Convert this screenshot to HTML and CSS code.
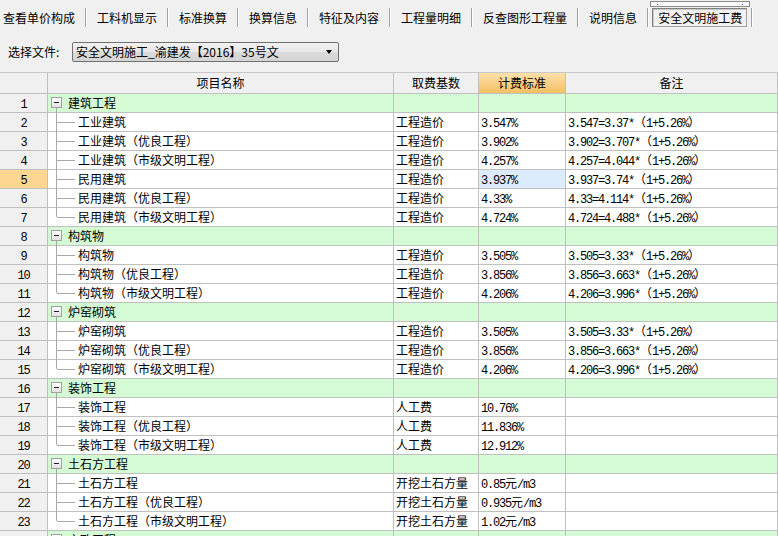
FILE: index.html
```html
<!DOCTYPE html>
<html lang="zh-CN">
<head>
<meta charset="utf-8">
<title>安全文明施工费</title>
<link rel="stylesheet" href="styles.css">
</head>
<body>
<div class="tabs">
  <div class="tab first">查看单价构成</div>
  <div class="tab">工料机显示</div>
  <div class="tab">标准换算</div>
  <div class="tab">换算信息</div>
  <div class="tab">特征及内容</div>
  <div class="tab">工程量明细</div>
  <div class="tab">反查图形工程量</div>
  <div class="tab">说明信息</div>
  <div class="tab active"><span class="pressed">安全文明施工费</span></div>
  <div class="scrollmark"><i></i><i></i></div>
</div>
<div class="filebar">
  <span class="label">选择文件:</span>
  <div class="combo"><span>安全文明施工_渝建发【2016】35号文</span><b class="arrow"></b></div>
</div>
<div class="grid">
  <div class="row head">
    <div class="c num"></div>
    <div class="c name">项目名称</div>
    <div class="c">取费基数</div>
    <div class="c hl">计费标准</div>
    <div class="c">备注</div>
  </div>

  <div class="row group"><div class="c num"><span class="m">1</span></div><div class="c name"><i class="box"></i>建筑工程</div><div class="c"></div><div class="c"></div><div class="c"></div></div>
  <div class="row"><div class="c num"><span class="m">2</span></div><div class="c name child">工业建筑</div><div class="c">工程造价</div><div class="c"><span class="m">3.547%</span></div><div class="c"><span class="m">3.547=3.37*</span>（<span class="m">1+5.26%</span>）</div></div>
  <div class="row"><div class="c num"><span class="m">3</span></div><div class="c name child">工业建筑（优良工程）</div><div class="c">工程造价</div><div class="c"><span class="m">3.902%</span></div><div class="c"><span class="m">3.902=3.707*</span>（<span class="m">1+5.26%</span>）</div></div>
  <div class="row"><div class="c num"><span class="m">4</span></div><div class="c name child">工业建筑（市级文明工程）</div><div class="c">工程造价</div><div class="c"><span class="m">4.257%</span></div><div class="c"><span class="m">4.257=4.044*</span>（<span class="m">1+5.26%</span>）</div></div>
  <div class="row sel"><div class="c num"><span class="m">5</span></div><div class="c name child">民用建筑</div><div class="c">工程造价</div><div class="c cur"><span class="m">3.937%</span></div><div class="c"><span class="m">3.937=3.74*</span>（<span class="m">1+5.26%</span>）</div></div>
  <div class="row"><div class="c num"><span class="m">6</span></div><div class="c name child">民用建筑（优良工程）</div><div class="c">工程造价</div><div class="c"><span class="m">4.33%</span></div><div class="c"><span class="m">4.33=4.114*</span>（<span class="m">1+5.26%</span>）</div></div>
  <div class="row"><div class="c num"><span class="m">7</span></div><div class="c name child last">民用建筑（市级文明工程）</div><div class="c">工程造价</div><div class="c"><span class="m">4.724%</span></div><div class="c"><span class="m">4.724=4.488*</span>（<span class="m">1+5.26%</span>）</div></div>

  <div class="row group"><div class="c num"><span class="m">8</span></div><div class="c name"><i class="box"></i>构筑物</div><div class="c"></div><div class="c"></div><div class="c"></div></div>
  <div class="row"><div class="c num"><span class="m">9</span></div><div class="c name child">构筑物</div><div class="c">工程造价</div><div class="c"><span class="m">3.505%</span></div><div class="c"><span class="m">3.505=3.33*</span>（<span class="m">1+5.26%</span>）</div></div>
  <div class="row"><div class="c num"><span class="m">10</span></div><div class="c name child">构筑物（优良工程）</div><div class="c">工程造价</div><div class="c"><span class="m">3.856%</span></div><div class="c"><span class="m">3.856=3.663*</span>（<span class="m">1+5.26%</span>）</div></div>
  <div class="row"><div class="c num"><span class="m">11</span></div><div class="c name child last">构筑物（市级文明工程）</div><div class="c">工程造价</div><div class="c"><span class="m">4.206%</span></div><div class="c"><span class="m">4.206=3.996*</span>（<span class="m">1+5.26%</span>）</div></div>

  <div class="row group"><div class="c num"><span class="m">12</span></div><div class="c name"><i class="box"></i>炉窑砌筑</div><div class="c"></div><div class="c"></div><div class="c"></div></div>
  <div class="row"><div class="c num"><span class="m">13</span></div><div class="c name child">炉窑砌筑</div><div class="c">工程造价</div><div class="c"><span class="m">3.505%</span></div><div class="c"><span class="m">3.505=3.33*</span>（<span class="m">1+5.26%</span>）</div></div>
  <div class="row"><div class="c num"><span class="m">14</span></div><div class="c name child">炉窑砌筑（优良工程）</div><div class="c">工程造价</div><div class="c"><span class="m">3.856%</span></div><div class="c"><span class="m">3.856=3.663*</span>（<span class="m">1+5.26%</span>）</div></div>
  <div class="row"><div class="c num"><span class="m">15</span></div><div class="c name child last">炉窑砌筑（市级文明工程）</div><div class="c">工程造价</div><div class="c"><span class="m">4.206%</span></div><div class="c"><span class="m">4.206=3.996*</span>（<span class="m">1+5.26%</span>）</div></div>

  <div class="row group"><div class="c num"><span class="m">16</span></div><div class="c name"><i class="box"></i>装饰工程</div><div class="c"></div><div class="c"></div><div class="c"></div></div>
  <div class="row"><div class="c num"><span class="m">17</span></div><div class="c name child">装饰工程</div><div class="c">人工费</div><div class="c"><span class="m">10.76%</span></div><div class="c"></div></div>
  <div class="row"><div class="c num"><span class="m">18</span></div><div class="c name child">装饰工程（优良工程）</div><div class="c">人工费</div><div class="c"><span class="m">11.836%</span></div><div class="c"></div></div>
  <div class="row"><div class="c num"><span class="m">19</span></div><div class="c name child last">装饰工程（市级文明工程）</div><div class="c">人工费</div><div class="c"><span class="m">12.912%</span></div><div class="c"></div></div>

  <div class="row group"><div class="c num"><span class="m">20</span></div><div class="c name"><i class="box"></i>土石方工程</div><div class="c"></div><div class="c"></div><div class="c"></div></div>
  <div class="row"><div class="c num"><span class="m">21</span></div><div class="c name child">土石方工程</div><div class="c">开挖土石方量</div><div class="c"><span class="m">0.85</span>元<span class="m">/m3</span></div><div class="c"></div></div>
  <div class="row"><div class="c num"><span class="m">22</span></div><div class="c name child">土石方工程（优良工程）</div><div class="c">开挖土石方量</div><div class="c"><span class="m">0.935</span>元<span class="m">/m3</span></div><div class="c"></div></div>
  <div class="row"><div class="c num"><span class="m">23</span></div><div class="c name child last">土石方工程（市级文明工程）</div><div class="c">开挖土石方量</div><div class="c"><span class="m">1.02</span>元<span class="m">/m3</span></div><div class="c"></div></div>

  <div class="row group"><div class="c num"><span class="m">24</span></div><div class="c name"><i class="box"></i>市政工程</div><div class="c"></div><div class="c"></div><div class="c"></div></div>
</div>
</body>
</html>
```
FILE: styles.css
```css
* { box-sizing: border-box; }
html, body {
  margin: 0;
  padding: 0;
  width: 778px;
  height: 536px;
  overflow: hidden;
  background: #f0f0f0;
  font-family: "Noto Sans CJK SC", "Liberation Sans", sans-serif;
  font-size: 12px;
  color: #000;
}

/* ---------- tab bar ---------- */
.tabs {
  position: relative;
  display: flex;
  align-items: flex-start;
  height: 36px;
  padding-top: 8px;
}
.tab {
  height: 19px;
  line-height: 19px;
  padding: 0 10px;
  border-right: 1px solid #a0a0a0;
  box-shadow: 1px 0 0 #ffffff;
  margin-right: 1px;
  white-space: nowrap;
}
.tab.first { padding-left: 3px; }
.tab.active { padding: 0 4px 0 3px; }
.pressed {
  display: block;
  height: 19px;
  line-height: 17px;
  padding: 0 4px 0 5px;
  border: 1px solid #a0a0a0;
  border-top-color: #808080;
  border-left-color: #808080;
  box-shadow: inset 1px 1px 0 #c8c8c8;
  background: repeating-conic-gradient(#ffffff 0 25%, #e6e6e6 0 50%) 0 0 / 2px 2px;
}
.scrollmark {
  position: absolute;
  left: 650px;
  top: 1px;
  width: 100px;
  height: 6px;
  border: 1px solid #8a8a8a;
  background: #f8f8f8;
}
.scrollmark i {
  position: absolute;
  top: 2px;
  width: 1px;
  height: 1px;
  background: #1c2fc0;
}
.scrollmark i:first-child { left: 6px; }
.scrollmark i:last-child { right: 6px; }

/* ---------- file selector ---------- */
.filebar {
  display: flex;
  align-items: flex-start;
  height: 36px;
  padding-top: 6px;
}
.label {
  margin-left: 8px;
  width: 64px;
  line-height: 20px;
}
.combo {
  position: relative;
  width: 267px;
  height: 20px;
  line-height: 18px;
  padding-left: 3px;
  border: 1px solid #707070;
  border-radius: 2px;
  background: linear-gradient(#f2f2f2, #e6e6e6 50%, #dadada 51%, #d4d4d4);
  white-space: nowrap;
  overflow: hidden;
}
.arrow {
  position: absolute;
  right: 6px;
  top: 7px;
  width: 0;
  height: 0;
  border-left: 3.5px solid transparent;
  border-right: 3.5px solid transparent;
  border-top: 4px solid #000;
}

/* ---------- grid ---------- */
.grid {
  width: 778px;
  border-top: 1px solid #c8c8c8;
}
.row {
  display: grid;
  grid-template-columns: 48px 346px 85px 87px 212px;
  height: 19px;
}
.c {
  position: relative;
  height: 19px;
  line-height: 18px;
  padding-left: 2px;
  border-right: 1px solid #c0c0c0;
  border-bottom: 1px solid #c0c0c0;
  background: #ffffff;
  white-space: nowrap;
  overflow: hidden;
}
.c.num {
  background: #f0f0f0;
  text-align: center;
  padding-left: 0;
}
.row.head { height: 21px; }
.row.head .c {
  height: 21px;
  line-height: 20px;
  background: #f0f0f0;
  text-align: center;
  padding-left: 0;
}
.row.head .c.hl {
  background: linear-gradient(#fde0a9, #f8d088 50%, #f2c163);
}
.row.group .c:not(.num) { background: #d4fbd4; }
.row.sel .c.num { background: #fdd691; }
.c.cur { background: #ddecfc; }

.m {
  font-family: "Liberation Mono", monospace;
  font-size: 12px;
  letter-spacing: -1.2px;
}

/* tree */
.c.name { padding-left: 20px; overflow: visible; }
.c.name.child { padding-left: 30px; }
.box {
  position: absolute;
  left: 3px;
  top: 3px;
  width: 11px;
  height: 11px;
  border: 1px solid #a0a0a0;
  background: linear-gradient(#ffffff, #e2e2e2);
}
.box::after {
  content: "";
  position: absolute;
  left: 2px;
  top: 4px;
  width: 5px;
  height: 1px;
  background: #202020;
}
.row.group .c.name::after {
  content: "";
  position: absolute;
  left: 8px;
  top: 14px;
  bottom: -1px;
  width: 1px;
  background: #a8a8a8;
}
.c.child::before {
  content: "";
  position: absolute;
  left: 8px;
  top: -1px;
  bottom: -1px;
  width: 1px;
  background: #a8a8a8;
}
.c.child.last::before { bottom: 9px; }
.c.child::after {
  content: "";
  position: absolute;
  left: 9px;
  top: 9px;
  width: 18px;
  height: 1px;
  background: #a8a8a8;
}
```
